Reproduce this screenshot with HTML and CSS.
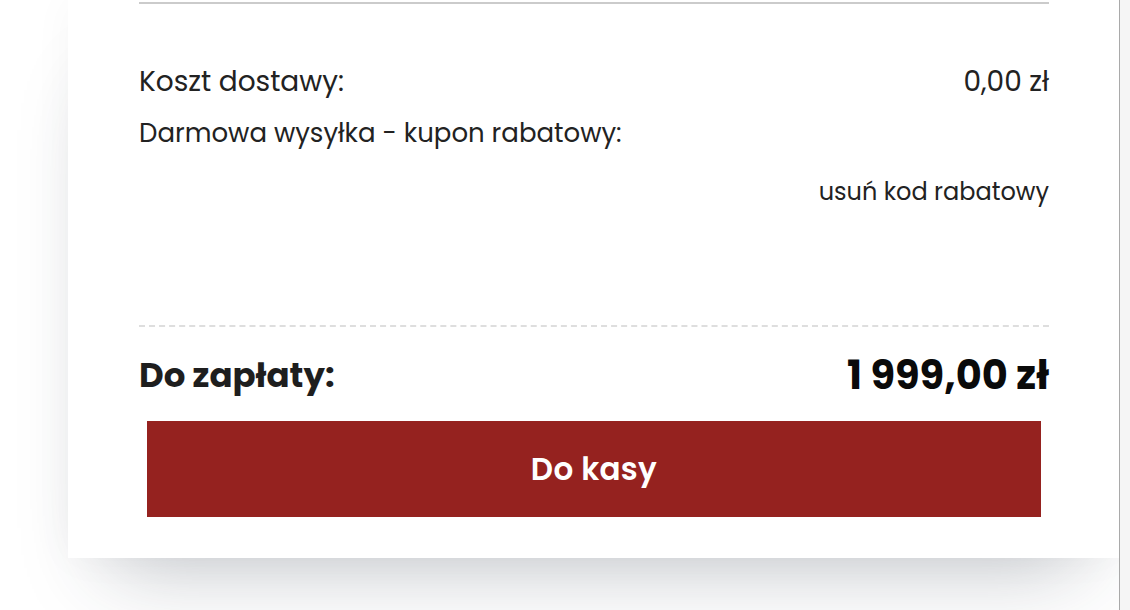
FILE: index.html
```html
<!DOCTYPE html>
<html lang="pl">
<head>
<meta charset="utf-8">
<title>Podsumowanie koszyka</title>
<link rel="stylesheet" href="styles.css">
</head>
<body>
<div class="page">
  <main class="main">
    <section class="card">
      <div class="rule"></div>
      <div class="costs">
        <div class="row row-shipping">
          <span class="label">Koszt dostawy:</span>
          <span class="value">0,00 zł</span>
        </div>
        <div class="row row-coupon">
          <span class="label">Darmowa wysyłka - kupon rabatowy:</span>
        </div>
        <div class="row row-remove">
          <a class="remove" href="#">usuń kod rabatowy</a>
        </div>
      </div>
      <div class="summary">
        <div class="total">
          <span class="total-label">Do zapłaty:</span>
          <span class="total-value">1 999,00 zł</span>
        </div>
        <button class="checkout" type="button">Do kasy</button>
      </div>
    </section>
  </main>
  <aside class="edge"></aside>
</div>
</body>
</html>
```

FILE: styles.css
```css
html, body {
  margin: 0;
  padding: 0;
  background: #ffffff;
}

body {
  font-family: "Poppins", "DejaVu Sans", sans-serif;
  color: #222222;
}

.page {
  display: flex;
  width: 1130px;
  height: 610px;
  overflow: hidden;
}

.main {
  flex: 1;
  padding-left: 68px;
}

.edge {
  width: 10px;
  border-left: 1px solid #a9a9a9;
  background: #f5f5f5;
}

.card {
  background: #ffffff;
  padding: 2px 70px 41px 71px;
  box-shadow: 0 0 40px rgba(0, 0, 0, 0.035), 0 50px 80px -40px rgba(40, 50, 70, 0.28);
}

.rule {
  height: 2px;
  background: #cbcbcb;
}

.costs {
  display: flex;
  flex-direction: column;
}

.row {
  display: flex;
  justify-content: space-between;
  line-height: 40px;
}

.row-shipping {
  margin-top: 58px;
  font-size: 28px;
}

.row-coupon {
  margin-top: 11px;
  font-size: 26px;
}

.row-remove {
  justify-content: flex-end;
  margin-top: 19px;
  font-size: 24px;
}

.remove {
  color: #222222;
  text-decoration: none;
}

.summary {
  margin-top: 113px;
  border-top: 2px dashed #dedede;
  padding-top: 24px;
}

.total {
  display: flex;
  justify-content: space-between;
  align-items: flex-end;
  line-height: 48px;
}

.total-label {
  font-size: 34px;
  font-weight: 700;
  color: #1e1e1e;
}

.total-value {
  font-size: 40px;
  font-weight: 700;
  color: #0a0a0a;
}

.checkout {
  display: flex;
  align-items: center;
  justify-content: center;
  width: calc(100% - 16px);
  height: 96px;
  margin: 22px 8px 0;
  border: 0;
  background: #95221f;
  color: #ffffff;
  font-family: "Poppins", "DejaVu Sans", sans-serif;
  font-size: 31px;
  font-weight: 600;
  letter-spacing: 0.3px;
  cursor: pointer;
}
```
